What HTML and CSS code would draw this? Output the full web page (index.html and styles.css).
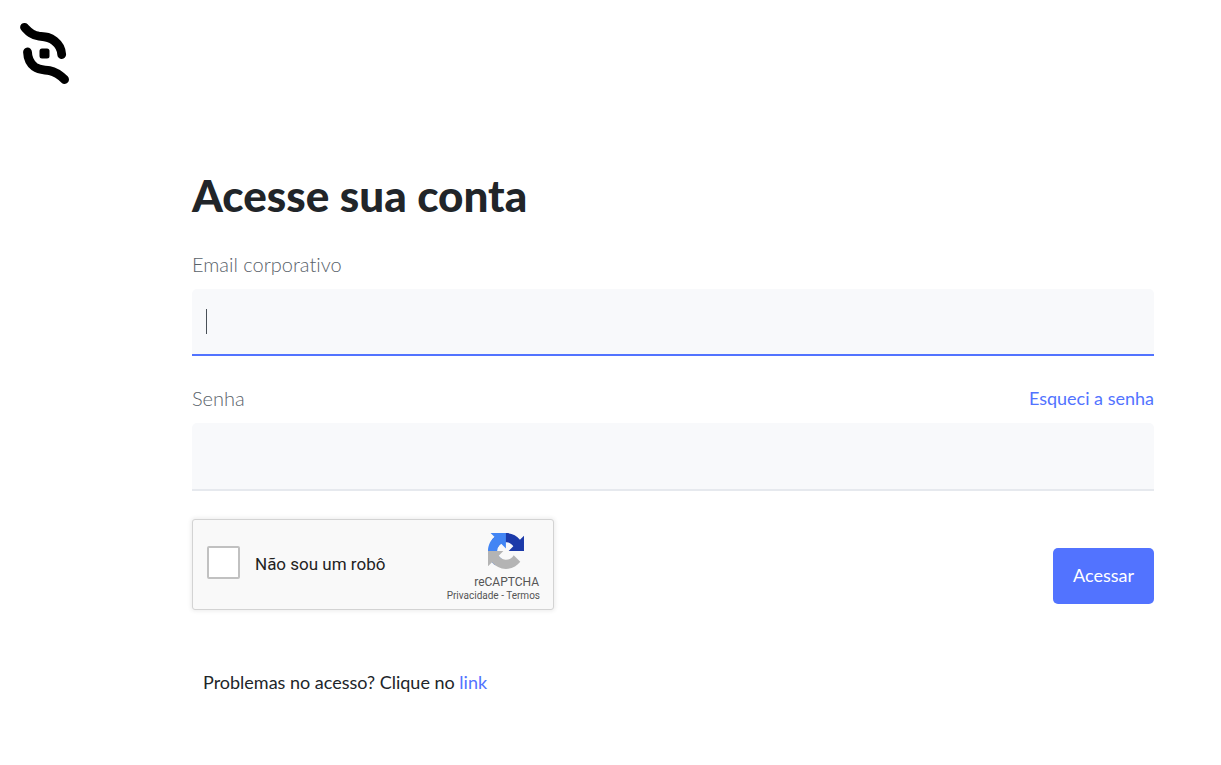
FILE: index.html
```html
<!DOCTYPE html>
<html lang="pt-BR">
<head>
<meta charset="utf-8">
<meta name="viewport" content="width=device-width, initial-scale=1">
<title>Acesse sua conta</title>
<link rel="stylesheet" href="styles.css">
</head>
<body>
<header class="header">
  <svg class="logo" viewBox="0 0 50 62" role="img" aria-label="Logo">
    <g fill="none" stroke="#000" stroke-width="8.800" stroke-linecap="round">
      <path d="M4.500 5.300C8 9 11.500 13.400 19 14.200C25 14.700 29 14.500 34.500 19C39.500 23 41.500 27.500 41.700 32.500"/>
      <path d="M7.500 30C7.700 35.500 9 40.500 14.500 44.800C19.500 48.500 24 47.600 29.500 48.600C36 49.800 40 53 44.600 57.500"/>
    </g>
    <rect x="19.500" y="26.500" width="10" height="10" rx="2.500"/>
  </svg>
</header>
<main class="main">
  <h1 class="title">Acesse sua conta</h1>
  <form class="form">
    <div class="field">
      <label class="label" for="email">Email corporativo</label>
      <div class="control">
        <input class="input input-active" id="email" type="email">
        <span class="caret"></span>
      </div>
    </div>
    <div class="field">
      <div class="label-row">
        <label class="label" for="senha">Senha</label>
        <a class="link" href="#">Esqueci a senha</a>
      </div>
      <input class="input" id="senha" type="password">
    </div>
    <div class="actions">
      <div class="captcha">
        <input class="captcha-box" id="robo" type="checkbox">
        <label class="captcha-label" for="robo">Não sou um robô</label>
        <div class="captcha-brand">
          <svg class="captcha-logo" viewBox="0 0 64 64" aria-hidden="true">
            <path fill="#1c3aa9" d="M64 31.955l-.033-1.37V4.687l-7.16 7.16C50.948 4.674 42.033.093 32.05.093c-10.4 0-19.622 4.96-25.458 12.64l11.736 11.86a15.55 15.55 0 0 1 4.754-5.334c2.05-1.6 4.952-2.906 8.968-2.906.485 0 .86.057 1.135.163 4.976.393 9.288 3.14 11.828 7.124l-8.307 8.307L64 31.953"/>
            <path fill="#4285f4" d="M31.862.094l-1.37.033H4.594l7.16 7.16C4.58 13.147 0 22.06 0 32.046c0 10.4 4.96 19.622 12.64 25.458L24.5 45.768a15.55 15.55 0 0 1-5.334-4.754c-1.6-2.05-2.906-4.952-2.906-8.968 0-.485.057-.86.163-1.135.393-4.976 3.14-9.288 7.124-11.828l8.307 8.307L31.86.095"/>
            <path fill="#b4b4b4" d="M.001 32.045l.033 1.37v25.898l7.16-7.16c5.86 7.173 14.774 11.754 24.76 11.754 10.4 0 19.622-4.96 25.458-12.64l-11.736-11.86a15.55 15.55 0 0 1-4.754 5.334c-2.05 1.6-4.952 2.906-8.968 2.906-.485 0-.86-.057-1.135-.163-4.976-.393-9.288-3.14-11.828-7.124l8.307-8.307c-10.522.04-22.4.066-27.295-.005"/>
          </svg>
          <span class="captcha-name">reCAPTCHA</span>
          <span class="captcha-terms"><a href="#">Privacidade</a> - <a href="#">Termos</a></span>
        </div>
      </div>
      <button class="submit" type="submit">Acessar</button>
    </div>
  </form>
  <p class="help">Problemas no acesso? Clique no <a class="link" href="#">link</a></p>
</main>
</body>
</html>
```
FILE: styles.css
```css
* {
  box-sizing: border-box;
}

body {
  margin: 0;
  background: #fff;
  color: #212529;
  font-family: Lato, "Open Sans", sans-serif;
  font-size: 18px;
  font-variant-ligatures: none;
  line-height: 24px;
}

a {
  text-decoration: none;
}

.header {
  padding: 22px 20px 0;
}

.logo {
  display: block;
  width: 50px;
  height: 62px;
}

.main {
  padding: 85px 67px 40px 192px;
}

.title {
  margin: 0;
  font-family: "Lato Black", Lato, sans-serif;
  font-size: 44px;
  font-weight: 900;
  line-height: 52px;
}

.form {
  display: flex;
  flex-direction: column;
  gap: 28px;
  margin-top: 28px;
}

.field {
  display: flex;
  flex-direction: column;
  gap: 11px;
}

.label-row {
  display: flex;
  align-items: center;
  justify-content: space-between;
}

.label {
  padding-top: 1px;
  color: #59626a;
  font-size: 20px;
  font-weight: 300;
  line-height: 27px;
}

.field:first-child .label {
  line-height: 28px;
}

.link {
  color: #5273ff;
}

.control {
  position: relative;
  display: flex;
}

.input {
  display: block;
  width: 100%;
  height: 68px;
  padding: 0 14px;
  border: 0;
  border-bottom: 2px solid #e6e9ee;
  border-radius: 5px 5px 0 0;
  outline: 0;
  background: #f8f9fb;
  color: #495057;
  font: inherit;
  font-size: 20px;
}

.input-active {
  height: 67px;
  border-bottom-color: #5273ff;
}

.caret {
  position: absolute;
  top: 20px;
  left: 14px;
  width: 1px;
  height: 25px;
  background: #495057;
}

.actions {
  display: flex;
  align-items: flex-end;
  justify-content: space-between;
  padding-bottom: 6px;
}

.captcha {
  display: flex;
  align-items: center;
  width: 362px;
  height: 91px;
  margin-bottom: -6px;
  padding: 0 13px 0 14px;
  border: 1px solid #d3d3d3;
  border-radius: 3px;
  background: #f9f9f9;
  box-shadow: 0 0 4px 1px rgba(0, 0, 0, 0.08);
  font-family: Roboto, sans-serif;
}

.captcha-box {
  appearance: none;
  width: 33px;
  height: 33px;
  margin: 0 15px 4px 0;
  border: 2px solid #c1c1c1;
  border-radius: 2px;
  background: #fff;
}

.captcha-label {
  padding-bottom: 2px;
  color: #222;
  font-size: 17px;
}

.captcha-brand {
  display: flex;
  flex-direction: column;
  align-items: flex-end;
  margin: 5px 0 0 auto;
  color: #555;
}

.captcha-logo {
  width: 36px;
  height: 36px;
  margin-right: 16px;
}

.captcha-name {
  margin: 5px 1px 0 0;
  font-size: 12px;
  line-height: 16px;
}

.captcha-terms {
  font-size: 10px;
  line-height: 12px;
}

.captcha-terms a {
  color: #555;
}

.submit {
  padding: 15px 20px 17px;
  border: 0;
  border-radius: 5px;
  background: #5273ff;
  color: #fff;
  font: inherit;
}

.help {
  margin: 60px 0 0;
  padding-left: 11px;
}
```
